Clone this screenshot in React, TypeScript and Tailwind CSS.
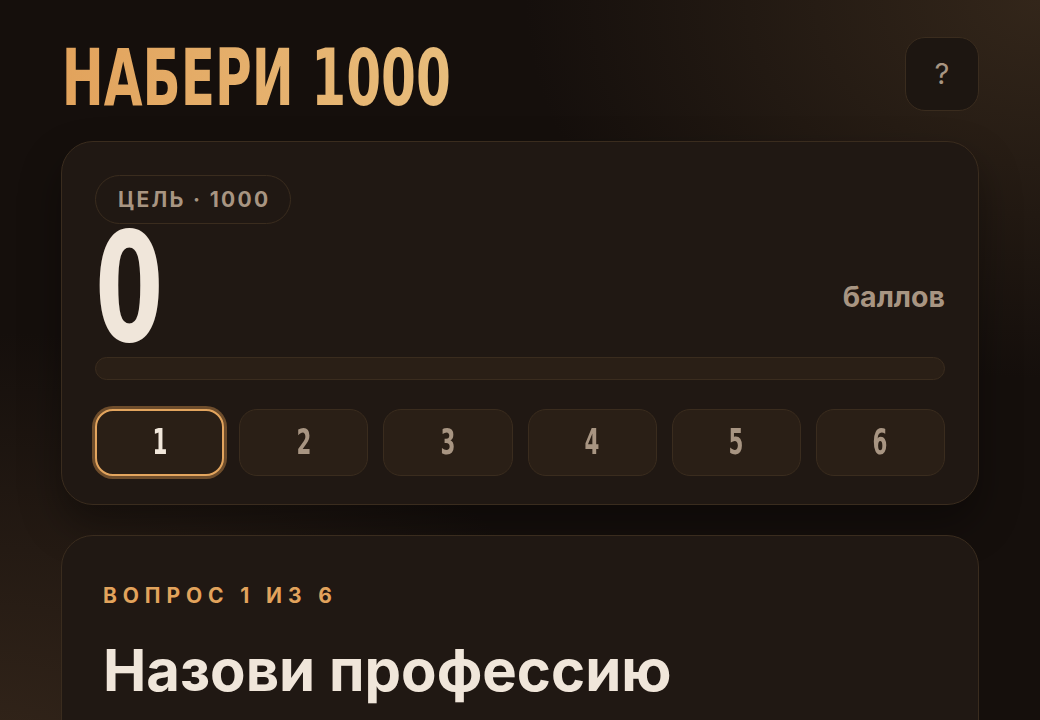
import { useState } from 'react';

// condensed display face: DejaVu Condensed squeezed further with scale-x
const display = "font-['DejaVu_Sans_Condensed','DejaVu_Sans',sans-serif] font-bold";
const body = "font-['Inter','Noto_Sans',sans-serif]";

const rounds = [1, 2, 3, 4, 5, 6];

function ScoreCard({ score, current, onPick }: { score: number; current: number; onPick: (n: number) => void }) {
  return (
    <section className="rounded-[32px] border border-[#3a2c1e] bg-[#201813] px-[33px] pt-[33px] pb-[28px] shadow-[0_20px_40px_rgba(0,0,0,0.35)]">
      <div className={`${body} inline-flex h-[49px] items-center rounded-full border border-[#3a2c1e] pl-[22px] pr-[20px] text-[21px] font-bold tracking-[0.11em] text-[#a89582]`}>
        ЦЕЛЬ · 1000
      </div>
      <div className="mt-[9px] flex h-[111px] items-end justify-between">
        <div className={`${display} origin-left scale-x-[0.72] text-[152px] leading-[111px] text-[#f0e6da]`}>{score}</div>
        <div className={`${body} mb-[25px] text-[28.5px] font-bold text-[#a89582]`}>баллов</div>
      </div>
      <div className="mt-[13px] h-[23px] rounded-full border border-[#3a2c1e] bg-[#2a1f16]" />
      <div className="mt-[29px] grid grid-cols-6 gap-[15px]">
        {rounds.map(n => (
          <button
            key={n}
            onClick={() => onPick(n)}
            className={`h-[67px] rounded-[18px] ${
              n === current
                ? 'border-2 border-[#e3a55e] bg-[#2a1f16] text-[#f0e6da] ring-[3px] ring-[#6e4d2c]'
                : 'border border-[#3a2c1e] bg-[#2a1f16] text-[#a89582]'
            }`}
          >
            <span className={`${display} inline-block scale-x-[0.68] text-[35px]`}>{n}</span>
          </button>
        ))}
      </div>
    </section>
  );
}

export default function App() {
  const [current, setCurrent] = useState(1);

  return (
    <div className="min-h-[720px] w-full overflow-hidden bg-[#150f0c] bg-[radial-gradient(ellipse_at_100%_0%,#33261a_0%,rgba(21,15,12,0)_35%),radial-gradient(ellipse_at_0%_100%,#33251a_0%,rgba(21,15,12,0)_40%)]">
      <div className="mx-auto flex w-[918px] flex-col gap-[30px] pt-[37px]">
        <header className="flex h-[74px] items-start justify-between">
          <h1
            className={`${display} origin-left translate-y-[4px] scale-x-[0.715] bg-gradient-to-r from-[#e2a35c] to-[#e8bd7c] bg-clip-text pl-[1px] text-[78px] leading-[74px] text-transparent`}
          >
            НАБЕРИ 1000
          </h1>
          <button className={`${body} flex h-[74px] w-[74px] items-center justify-center rounded-[20px] border border-[#3a2c1e] bg-[#1d1611] text-[29px] text-[#a89582]`}>
            ?
          </button>
        </header>

        <ScoreCard score={0} current={current} onPick={setCurrent} />

        <section className="h-[230px] rounded-[32px] border border-[#3a2c1e] bg-[#201813] px-[41px] pt-[44px]">
          <p className={`${body} text-[21px] font-bold tracking-[0.28em] text-[#e2a35c]`}>
            ВОПРОС {current} ИЗ 6
          </p>
          <h2 className={`${body} mt-[23px] text-[58px] font-bold leading-[70px] text-[#f0e6da]`}>
            Назови профессию
          </h2>
        </section>
      </div>
    </div>
  );
}
